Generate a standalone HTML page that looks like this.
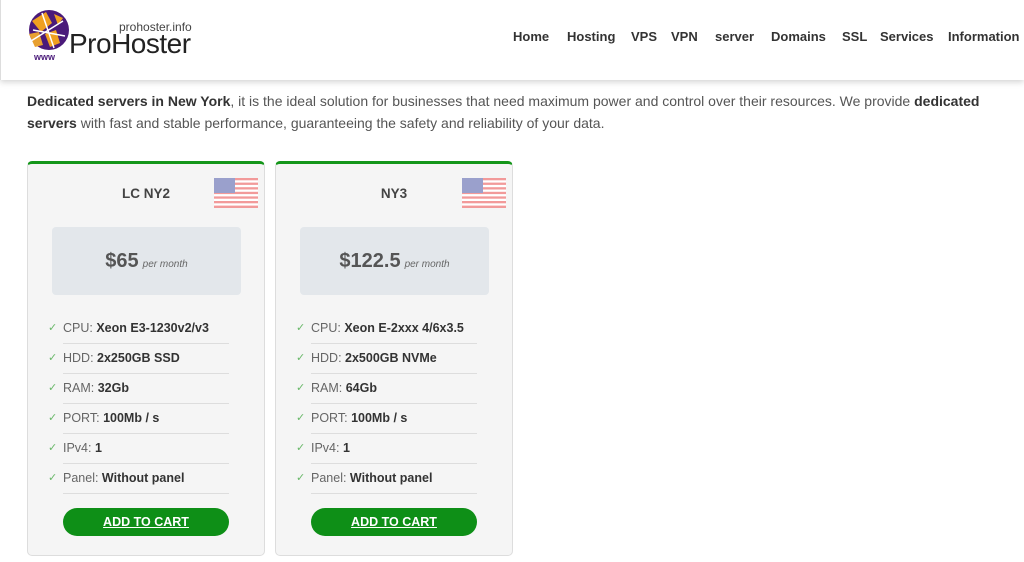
<!DOCTYPE html>
<html><head><meta charset="utf-8"><style>
*{box-sizing:border-box;margin:0;padding:0}
body{width:1024px;height:562px;overflow:hidden;background:#fff;font-family:"Liberation Sans",sans-serif;color:#444;position:relative}
.hdr{position:absolute;left:0;top:0;width:1024px;height:80px;background:#fff;box-shadow:0 2px 6px rgba(0,0,0,.18);border-left:1px solid #ddd}
.nav{position:absolute;top:29px;font-size:13px;font-weight:bold;color:#333}
.nav span{position:absolute;white-space:nowrap}
.intro{position:absolute;left:27px;top:90px;width:980px;font-size:14px;line-height:22px;color:#555}
.intro b{color:#333}
.card{position:absolute;top:161px;width:238px;height:395px;background:#f5f5f5;border:1px solid #ddd;border-top:3px solid #14961a;border-radius:5px}
.title{position:absolute;top:22px;left:0;width:100%;text-align:center;font-size:13.5px;font-weight:bold;color:#444}
.flag{position:absolute;left:186px;top:14px;width:44px;height:30px}
.price{position:absolute;left:24px;top:63px;width:189px;height:68px;background:#e3e7eb;border-radius:4px;text-align:center;line-height:68px}
.price b{font-size:20px;color:#555}
.price i{font-size:10px;color:#666;margin-left:4px}
.li{position:absolute;left:35px;width:166px;height:30px;border-bottom:1px solid #ddd;font-size:12.5px;line-height:28px;color:#666}
.li b{color:#333}
.li:before{content:"✓";position:absolute;left:-15px;color:#6ab86a;font-size:11px}
.btn{position:absolute;left:35px;top:344px;width:166px;height:28px;background:#0e8f17;border-radius:14px;color:#fff;font-weight:bold;font-size:12.5px;text-align:center;line-height:28px;text-decoration:underline}
</style></head><body>
<div class="hdr">
<svg style="position:absolute;left:26px;top:8px" width="46" height="54" viewBox="0 0 46 54">
<circle cx="22" cy="22" r="20" fill="#4a1a7a"/>
<path d="M5 13 L19 4 L25 15 L14 24Z" fill="#f0a020"/>
<path d="M2 26 L12 24 L16 37 L8 39Z" fill="#e8a030"/>
<path d="M18 26 L29 22 L33 35 L23 39Z" fill="#f0a020"/>
<path d="M27 6 L36 10 L31 17Z" fill="#f0a020"/>
<path d="M6 22 L38 28 M15 5 L27 40 M4 33 L36 13" stroke="#fff" stroke-width="1.5"/>
<text x="7" y="52" font-size="9" font-weight="bold" fill="#4a1a7a" font-family="Liberation Sans">www</text>
</svg>
<div style="position:absolute;left:118px;top:20px;font-size:12px;color:#444">prohoster.info</div>
<div style="position:absolute;left:68px;top:28px;font-size:28px;color:#222;letter-spacing:-0.5px">ProHoster</div>
<div class="nav"><span style="left:512px">Home</span><span style="left:566px">Hosting</span><span style="left:630px">VPS</span><span style="left:670px">VPN</span><span style="left:714px">server</span><span style="left:770px">Domains</span><span style="left:841px">SSL</span><span style="left:879px">Services</span><span style="left:947px">Information</span></div>
</div>
<div class="intro"><b>Dedicated servers in New York</b>, it is the ideal solution for businesses that need maximum power and control over their resources. We provide <b>dedicated servers</b> with fast and stable performance, guaranteeing the safety and reliability of your data.</div>

<div class="card" style="left:27px">
<div class="title">LC NY2</div>
<svg class="flag" viewBox="0 0 44 30"><rect width="44" height="30" fill="#fff"/><g fill="#f29a9a"><rect y="0" width="44" height="2.3"/><rect y="4.6" width="44" height="2.3"/><rect y="9.2" width="44" height="2.3"/><rect y="13.8" width="44" height="2.3"/><rect y="18.4" width="44" height="2.3"/><rect y="23" width="44" height="2.3"/><rect y="27.6" width="44" height="2.4"/></g><rect width="21" height="15" fill="#9aa0cc"/></svg>
<div class="price"><b>$65</b><i>per month</i></div>
<div class="li" style="top:150px">CPU: <b>Xeon E3-1230v2/v3</b></div>
<div class="li" style="top:180px">HDD: <b>2x250GB SSD</b></div>
<div class="li" style="top:210px">RAM: <b>32Gb</b></div>
<div class="li" style="top:240px">PORT: <b>100Mb / s</b></div>
<div class="li" style="top:270px">IPv4: <b>1</b></div>
<div class="li" style="top:300px">Panel: <b>Without panel</b></div>
<div class="btn">ADD TO CART</div>
</div>

<div class="card" style="left:275px">
<div class="title">NY3</div>
<svg class="flag" viewBox="0 0 44 30"><rect width="44" height="30" fill="#fff"/><g fill="#f29a9a"><rect y="0" width="44" height="2.3"/><rect y="4.6" width="44" height="2.3"/><rect y="9.2" width="44" height="2.3"/><rect y="13.8" width="44" height="2.3"/><rect y="18.4" width="44" height="2.3"/><rect y="23" width="44" height="2.3"/><rect y="27.6" width="44" height="2.4"/></g><rect width="21" height="15" fill="#9aa0cc"/></svg>
<div class="price"><b>$122.5</b><i>per month</i></div>
<div class="li" style="top:150px">CPU: <b>Xeon E-2xxx 4/6x3.5</b></div>
<div class="li" style="top:180px">HDD: <b>2x500GB NVMe</b></div>
<div class="li" style="top:210px">RAM: <b>64Gb</b></div>
<div class="li" style="top:240px">PORT: <b>100Mb / s</b></div>
<div class="li" style="top:270px">IPv4: <b>1</b></div>
<div class="li" style="top:300px">Panel: <b>Without panel</b></div>
<div class="btn">ADD TO CART</div>
</div>
</body></html>
